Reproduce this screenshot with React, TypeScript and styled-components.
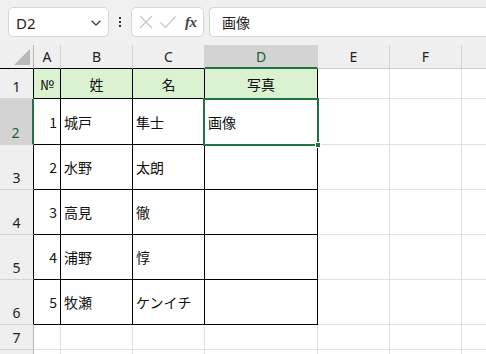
import React from "react";
import styled, { createGlobalStyle } from "styled-components";

const GlobalStyle = createGlobalStyle`
  html, body {
    margin: 0;
    padding: 0;
    width: 486px;
    height: 354px;
    overflow: hidden;
    background: #ffffff;
  }
  * { box-sizing: border-box; }
`;

const GREEN = "#217346";
const BLACK = "#000000";
const GRID = "#e0e0e0";
const HEAD_LINE = "#d4d4d4";
const CJK = `"Noto Sans CJK JP", "Noto Sans", sans-serif`;
const UI = `"Noto Sans", "Noto Sans CJK JP", sans-serif`;

const columns = ["A", "B", "C", "D", "E", "F", "G"];
const colWidths = [34, 27, 72, 72, 113, 72, 72, 72];
const rowHeights = [24, 30, 46, 45, 45, 45, 45, 25, 30];

type Align = "left" | "right" | "center";

const rows: { n: number; cells: string[]; head?: boolean }[] = [
  { n: 1, cells: ["№", "姓", "名", "写真"], head: true },
  { n: 2, cells: ["1", "城戸", "隼士", "画像"] },
  { n: 3, cells: ["2", "水野", "太朗", ""] },
  { n: 4, cells: ["3", "高見", "徹", ""] },
  { n: 5, cells: ["4", "浦野", "惇", ""] },
  { n: 6, cells: ["5", "牧瀬", "ケンイチ", ""] },
  { n: 7, cells: [] },
  { n: 8, cells: [] },
];

export default function App() {
  return (
    <>
      <GlobalStyle />
      <Page>
        <Toolbar>
          <NameBox>
            <span>D2</span>
            <svg width="12" height="8" viewBox="0 0 12 8">
              <path d="M1.5 1.8 L6 6 L10.5 1.8" fill="none" stroke="#444" strokeWidth="1.3" />
            </svg>
          </NameBox>
          <Kebab>
            <i />
            <i />
            <i />
          </Kebab>
          <FormulaButtons>
            <svg width="16" height="16" viewBox="0 0 16 16">
              <path d="M2 2 L14 14 M14 2 L2 14" stroke="#c4c4c4" strokeWidth="1.2" />
            </svg>
            <svg width="18" height="16" viewBox="0 0 18 16">
              <path d="M1.5 8.5 L6.5 13.5 L16.5 2.5" fill="none" stroke="#c4c4c4" strokeWidth="1.2" />
            </svg>
            <Fx>fx</Fx>
          </FormulaButtons>
          <FormulaInput>画像</FormulaInput>
        </Toolbar>

        <Sheet>
          <Corner>
            <svg width="16" height="16" viewBox="0 0 16 16">
              <path d="M16 0 L16 16 L0 16 Z" fill="#b9b9b9" />
            </svg>
          </Corner>
          {columns.map((c, i) => (
            <ColHead key={c} $selected={c === "D"} $dark={i < 3}>
              {c}
            </ColHead>
          ))}

          {rows.map((r) => (
            <React.Fragment key={r.n}>
              <RowHead $selected={r.n === 2} $dark={r.n <= 6}>
                {r.n}
              </RowHead>
              {columns.map((_, ci) => {
                const inTable = r.n <= 6 && ci < 4;
                const text = r.cells[ci] ?? "";
                let align: Align = "left";
                if (r.head) align = "center";
                else if (ci === 0) align = "right";
                return (
                  <Cell key={ci} $align={align} $fill={r.head && ci < 4} $dark={inTable}>
                    {text}
                  </Cell>
                );
              })}
            </React.Fragment>
          ))}

          <Selection>
            <FillHandle />
          </Selection>
        </Sheet>
      </Page>
    </>
  );
}

const Page = styled.div`
  width: 486px;
  height: 354px;
  overflow: hidden;
  background: #ffffff;
`;

const Toolbar = styled.div`
  height: 45px;
  background: #f0f0f0;
  display: flex;
  align-items: center;
  padding: 0 0 1px 8px;
`;

const NameBox = styled.div`
  width: 101px;
  height: 30px;
  background: #ffffff;
  border: 1px solid #d6d6d6;
  border-radius: 5px;
  display: flex;
  align-items: center;
  justify-content: space-between;
  padding: 2px 6px 0 7px;
  font-family: ${UI};
  font-size: 15px;
  color: #222;
`;

const Kebab = styled.div`
  width: 22px;
  display: flex;
  flex-direction: column;
  align-items: center;
  gap: 2px;
  i {
    width: 2px;
    height: 2px;
    background: #333;
  }
`;

const FormulaButtons = styled.div`
  width: 73px;
  height: 30px;
  background: #ffffff;
  border: 1px solid #d6d6d6;
  border-radius: 5px;
  display: flex;
  align-items: center;
  gap: 5px;
  padding: 0 0 0 6px;
`;

const Fx = styled.span`
  font-family: "Liberation Serif", serif;
  font-style: italic;
  font-weight: bold;
  font-size: 15px;
  color: #444;
  margin-left: 3px;
  letter-spacing: -0.5px;
`;

const FormulaInput = styled.div`
  flex: 1;
  height: 30px;
  margin-left: 5px;
  background: #ffffff;
  border: 1px solid #d6d6d6;
  border-right: none;
  border-radius: 5px 0 0 5px;
  display: flex;
  align-items: center;
  padding: 0 0 1px 12px;
  font-family: ${CJK};
  font-size: 14px;
  color: #222;
`;

const Sheet = styled.div`
  position: relative;
  display: grid;
  grid-template-columns: ${colWidths.map((w) => `${w}px`).join(" ")};
  grid-template-rows: ${rowHeights.map((h) => `${h}px`).join(" ")};
`;

const Corner = styled.div`
  background: #efefef;
  border-right: 1px solid #b5b5b5;
  border-bottom: 1px solid ${BLACK};
  display: flex;
  align-items: flex-end;
  justify-content: flex-end;
  padding: 0 3px 3px 0;
`;

const ColHead = styled.div<{ $selected: boolean; $dark: boolean }>`
  background: ${(p) => (p.$selected ? "#d3d3d3" : "#efefef")};
  border-right: 1px solid ${HEAD_LINE};
  border-bottom: ${(p) =>
    p.$selected ? `2px solid ${GREEN}` : `1px solid ${p.$dark ? BLACK : "#cfcfcf"}`};
  display: flex;
  align-items: center;
  justify-content: center;
  padding-top: ${(p) => (p.$selected ? "1px" : "0")};
  font-family: ${UI};
  font-size: 14px;
  color: ${(p) => (p.$selected ? "#1b5e38" : "#222")};
`;

const RowHead = styled.div<{ $selected: boolean; $dark: boolean }>`
  background: ${(p) => (p.$selected ? "#d3d3d3" : "#efefef")};
  border-right: ${(p) =>
    p.$selected ? `2px solid ${GREEN}` : `1px solid ${p.$dark ? BLACK : "#b5b5b5"}`};
  border-bottom: 1px solid ${HEAD_LINE};
  display: flex;
  align-items: flex-end;
  justify-content: center;
  padding: 0 ${(p) => (p.$selected ? "1px" : "0")} 2px 0;
  font-family: ${UI};
  font-size: 14px;
  color: ${(p) => (p.$selected ? "#1b5e38" : "#222")};
`;

const Cell = styled.div<{ $align: Align; $fill?: boolean; $dark: boolean }>`
  background: ${(p) => (p.$fill ? "#daf2d0" : "#ffffff")};
  border-right: 1px solid ${(p) => (p.$dark ? BLACK : GRID)};
  border-bottom: 1px solid ${(p) => (p.$dark ? BLACK : GRID)};
  display: flex;
  align-items: center;
  justify-content: ${(p) =>
    p.$align === "right" ? "flex-end" : p.$align === "center" ? "center" : "flex-start"};
  padding: 0 3px;
  font-family: ${CJK};
  font-size: 14px;
  color: #111;
  white-space: nowrap;
  overflow: hidden;
`;

const Selection = styled.div`
  position: absolute;
  left: 203px;
  top: 53px;
  width: 116px;
  height: 48px;
  border: 2px solid ${GREEN};
  pointer-events: none;
`;

const FillHandle = styled.div`
  position: absolute;
  right: -4px;
  bottom: -4px;
  width: 6px;
  height: 6px;
  background: ${GREEN};
  border: 1px solid #ffffff;
`;
